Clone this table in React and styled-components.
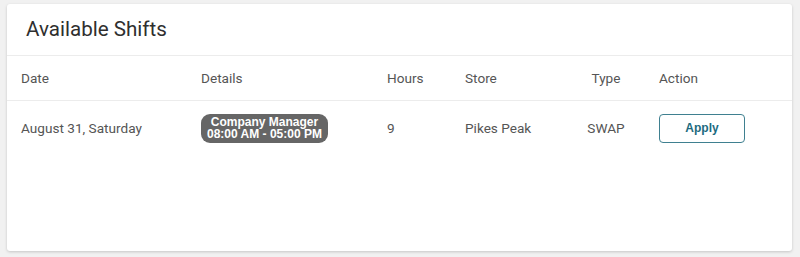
import styled, { createGlobalStyle } from "styled-components";

const GlobalStyle = createGlobalStyle`
  body {
    margin: 0;
    background-color: #f1f1f1;
    font-family: Roboto, "Liberation Sans", sans-serif;
  }
`;

const Page = styled.div`
  padding: 4px 8px 6px 7px;
`;

const Card = styled.div`
  height: 247px;
  background-color: #ffffff;
  border-radius: 3px;
  box-shadow: 0 1px 3px rgba(0, 0, 0, 0.18);
  overflow: hidden;
`;

const Title = styled.h2`
  margin: 0;
  height: 49px;
  display: flex;
  align-items: center;
  padding: 0 19px 2px;
  font-size: 20.6px;
  font-weight: 400;
  color: #2f2f2f;
  border-bottom: 1px solid #ececec;
`;

const Row = styled.div`
  display: grid;
  grid-template-columns: 180px 186px 78px 122px 72px 1fr;
  align-items: center;
  padding-left: 14px;
  height: ${(p) => p.$height}px;
  border-bottom: ${(p) => (p.$divider ? "1px solid #ececec" : "none")};
`;

const Cell = styled.div`
  font-size: 13.6px;
  color: #555555;
  text-align: ${(p) => (p.$center ? "center" : "left")};
  padding-right: ${(p) => (p.$center ? "34px" : "0")};
`;

const Badge = styled.span`
  display: inline-flex;
  flex-direction: column;
  align-items: center;
  padding: 2px 6px 3px;
  border-radius: 9px;
  background-color: #666666;
  color: #ffffff;
  font-family: "Liberation Sans", Arial, sans-serif;
  font-weight: 700;
  font-size: 12px;
  line-height: 12px;
`;

const ApplyButton = styled.button`
  width: 86px;
  height: 29px;
  border: 1px solid #3f8090;
  border-radius: 4px;
  background: #ffffff;
  color: #1d6b80;
  font-family: "Liberation Sans", Arial, sans-serif;
  font-weight: 700;
  font-size: 12px;
  cursor: pointer;
`;

const columns = ["Date", "Details", "Hours", "Store", "Type", "Action"];

const shifts = [
  {
    date: "August 31, Saturday",
    role: "Company Manager",
    time: "08:00 AM - 05:00 PM",
    hours: 9,
    store: "Pikes Peak",
    type: "SWAP",
  },
];

const App = () => {
  return (
    <Page>
      <GlobalStyle />
      <Card>
        <Title>Available Shifts</Title>
        <Row $height={44} $divider>
          {columns.map((c) => (
            <Cell key={c} $center={c === "Type"}>
              {c}
            </Cell>
          ))}
        </Row>
        {shifts.map((s) => (
          <Row key={s.date} $height={54}>
            <Cell>{s.date}</Cell>
            <Cell>
              <Badge>
                <span>{s.role}</span>
                <span>{s.time}</span>
              </Badge>
            </Cell>
            <Cell>{s.hours}</Cell>
            <Cell>{s.store}</Cell>
            <Cell $center>{s.type}</Cell>
            <Cell>
              <ApplyButton>Apply</ApplyButton>
            </Cell>
          </Row>
        ))}
      </Card>
    </Page>
  );
};

export default App;
